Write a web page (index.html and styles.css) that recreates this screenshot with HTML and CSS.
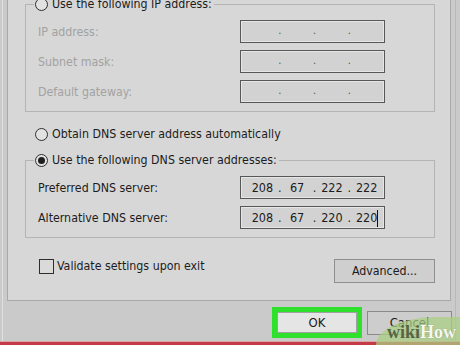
FILE: index.html
```html
<!DOCTYPE html>
<html>
<head>
<meta charset="utf-8">
<link rel="stylesheet" href="styles.css">
</head>
<body>
<div class="screen">
  <div class="panel">
    <fieldset class="group group-ip">
      <legend class="legend"><span class="opt"><span class="radio"></span>Use the following IP address:</span></legend>
      <div class="rows">
        <span class="label disabled">IP address:</span>
        <div class="ipbox"><span class="seg"></span><span class="dot">.</span><span class="seg"></span><span class="dot">.</span><span class="seg"></span><span class="dot">.</span><span class="seg"></span></div>
        <span class="label disabled">Subnet mask:</span>
        <div class="ipbox"><span class="seg"></span><span class="dot">.</span><span class="seg"></span><span class="dot">.</span><span class="seg"></span><span class="dot">.</span><span class="seg"></span></div>
        <span class="label disabled">Default gateway:</span>
        <div class="ipbox"><span class="seg"></span><span class="dot">.</span><span class="seg"></span><span class="dot">.</span><span class="seg"></span><span class="dot">.</span><span class="seg"></span></div>
      </div>
    </fieldset>
    <div class="opt option"><span class="radio"></span>Obtain DNS server address automatically</div>
    <fieldset class="group group-dns">
      <legend class="legend"><span class="opt"><span class="radio checked"></span>Use the following DNS server addresses:</span></legend>
      <div class="rows">
        <span class="label">Preferred DNS server:</span>
        <div class="ipbox enabled"><span class="seg">208</span><span class="dot">.</span><span class="seg">67</span><span class="dot">.</span><span class="seg">222</span><span class="dot">.</span><span class="seg">222</span></div>
        <span class="label">Alternative DNS server:</span>
        <div class="ipbox enabled"><span class="seg">208</span><span class="dot">.</span><span class="seg">67</span><span class="dot">.</span><span class="seg">220</span><span class="dot">.</span><span class="seg">220<span class="caret"></span></span></div>
      </div>
    </fieldset>
    <div class="footer-row">
      <div class="check"><span class="box"></span>Validate settings upon exit</div>
      <div class="btn btn-advanced">Advanced...</div>
    </div>
  </div>
  <div class="actions">
    <div class="ok-frame"><div class="btn btn-ok">OK</div></div>
    <div class="btn btn-cancel">Cancel</div>
  </div>
  <div class="redline"></div>
  <div class="wikihow"><span class="wiki">wiki</span><span class="how">How</span></div>
</div>
</body>
</html>
```
FILE: styles.css
```css
html, body {
  margin: 0;
  padding: 0;
}
body {
  width: 460px;
  height: 345px;
  overflow: hidden;
  background: #cacaca;
  font-family: "DejaVu Sans Condensed", "DejaVu Sans", sans-serif;
  font-stretch: condensed;
  font-size: 12.3px;
  color: #1c1c1c;
}
.screen {
  position: relative;
  width: 460px;
  height: 345px;
  display: flex;
  flex-direction: column;
  background:
    linear-gradient(to right, transparent 0 2px, #e0e0e0 2px 3px, transparent 3px 455px, #b9b9b9 455px 456px, transparent 456px),
    #cacaca;
}
.panel {
  margin-left: 7px;
  width: 444px;
  height: 301px;
  flex: none;
  box-sizing: border-box;
  border: 1px solid #a9a9a9;
  border-top: none;
  background: #d7d7d7;
  padding-left: 17px;
}
.group {
  width: 410px;
  box-sizing: border-box;
  margin: 0;
  padding: 0 0 8px 0;
  border: 1px solid #b4b4b4;
  min-inline-size: 0;
}
.group-ip {
  margin-top: -4px;
}
.group-dns {
  margin-top: 10px;
}
.legend {
  margin-left: 8px;
  padding: 0 2px 0 1px;
  line-height: 16px;
  height: 16px;
}
.opt {
  display: flex;
  align-items: center;
  gap: 4px;
  height: 16px;
  line-height: 16px;
}
.option {
  margin: 14px 0 0 10px;
}
.radio {
  width: 13px;
  height: 13px;
  box-sizing: border-box;
  border: 1px solid #2e2e2e;
  border-radius: 50%;
  background: #e2e2e2;
  flex: none;
  position: relative;
}
.radio.checked::after {
  content: "";
  position: absolute;
  left: 2px;
  top: 2px;
  width: 7px;
  height: 7px;
  border-radius: 50%;
  background: #1e1e1e;
}
.rows {
  display: grid;
  grid-template-columns: 202px 145px;
  grid-auto-rows: 23px;
  row-gap: 7px;
  padding: 8px 0 0 12px;
  align-items: center;
}
.label.disabled {
  color: #a2a2a2;
}
.ipbox {
  width: 145px;
  height: 23px;
  box-sizing: border-box;
  border: 1px solid #575757;
  box-shadow: inset 0 0 0 1px #e6e6e6;
  background: #d2d2d2;
  display: flex;
  align-items: center;
  padding: 0 2px 0 6px;
  line-height: 16px;
  font-size: 12.5px;
}
.ipbox .seg {
  flex: 1;
  text-align: center;
  position: relative;
}
.ipbox .dot {
  width: 4px;
  text-align: center;
}
.ipbox:not(.enabled) .dot {
  color: #555;
  font-size: 11px;
  margin-top: -2px;
}
.caret {
  position: absolute;
  top: 0;
  width: 1px;
  height: 17px;
  background: #111;
}
.footer-row {
  width: 410px;
  margin-top: 21px;
  display: flex;
  justify-content: space-between;
  align-items: flex-start;
  padding-left: 14px;
  box-sizing: border-box;
}
.check {
  display: flex;
  align-items: center;
  gap: 3px;
  height: 16px;
  margin-top: -1px;
}
.check .box {
  width: 15px;
  height: 15px;
  box-sizing: border-box;
  border: 1px solid #2e2e2e;
  background: #dadada;
}
.btn {
  box-sizing: border-box;
  text-align: center;
  color: #1a1a1a;
}
.btn-advanced {
  width: 101px;
  height: 24px;
  line-height: 22px;
  border: 1px solid #8f8f8f;
  background: #cfcfcf;
}
.actions {
  display: flex;
  justify-content: flex-end;
  align-items: center;
  gap: 5px;
  padding-right: 8px;
  margin-top: 6px;
  height: 31px;
  flex: none;
}
.ok-frame {
  width: 90px;
  height: 31px;
  box-sizing: border-box;
  border: 5px solid #2fe02c;
  display: flex;
}
.btn-ok {
  width: 80px;
  height: 21px;
  line-height: 19px;
  border: 1px solid #a0a0a0;
  background: #e5e5e5;
  font-size: 13px;
}
.btn-cancel {
  width: 85px;
  height: 24px;
  line-height: 22px;
  border: 1px solid #8a8a8a;
  background: #cdcdcd;
  font-size: 13px;
}
.redline {
  margin-top: auto;
  height: 3px;
  border-top: 1px solid #d9a3a6;
  background: #c43b47;
  flex: none;
}
.wikihow {
  position: absolute;
  right: 0;
  bottom: 0;
  width: 84px;
  height: 28px;
  box-sizing: border-box;
  border-top-left-radius: 60px 28px;
  background: rgba(170, 206, 130, 0.72);
  font-family: "Liberation Serif", serif;
  font-weight: bold;
  font-size: 18px;
  line-height: 30px;
  text-align: right;
  padding-right: 4px;
}
.wiki {
  color: #566445;
}
.how {
  color: #f5f8f0;
  text-shadow: 0 0 1px #7a8a66;
}
```
